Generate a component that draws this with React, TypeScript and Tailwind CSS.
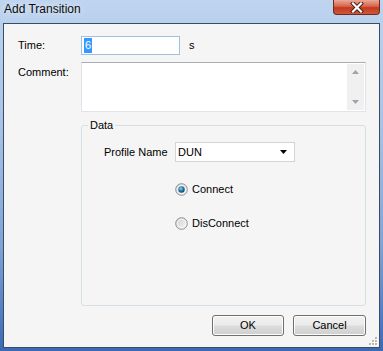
const Radio = ({ checked }: { checked?: boolean }) => (
  <svg width="13" height="13" viewBox="0 0 13 13">
    <defs>
      <linearGradient id={checked ? "rgOn" : "rgOff"} x1="0" y1="0" x2="1" y2="1">
        <stop offset="0" stopColor="#cfcfcf" />
        <stop offset="1" stopColor="#f7f7f7" />
      </linearGradient>
      <radialGradient id="dotOn" cx="0.4" cy="0.35" r="0.7">
        <stop offset="0" stopColor="#8fd3f5" />
        <stop offset="0.5" stopColor="#2c7bb3" />
        <stop offset="1" stopColor="#0d3e63" />
      </radialGradient>
    </defs>
    <circle cx="6.5" cy="6.5" r="5.8" fill={`url(#${checked ? "rgOn" : "rgOff"})`} stroke="#8c9094" strokeWidth="1" />
    <circle cx="6.5" cy="6.5" r="4.2" fill="none" stroke="#fbfbfb" strokeWidth="0.8" />
    {checked && <circle cx="6.5" cy="6.5" r="3.2" fill="url(#dotOn)" />}
  </svg>
);

const Button = ({ label, w }: { label: string; w: string }) => (
  <button
    className={`${w} h-[21px] rounded-[3px] border border-[#707070] bg-[linear-gradient(to_bottom,#f2f2f2_0%,#ebebeb_48%,#dddddd_52%,#cfcfcf_100%)] text-[11px] leading-[13px] text-black shadow-[inset_0_0_0_1px_#fcfcfc]`}
  >
    {label}
  </button>
);

export default function App() {
  return (
    <div className="w-[383px] h-[351px] flex flex-col bg-[linear-gradient(to_bottom,#bed4ef_0%,#a8c3e7_35%,#7fa3d6_70%,#3a6ab6_100%)] font-['Liberation_Sans',Arial,sans-serif] text-black overflow-hidden">
      {/* Title bar */}
      <div className="h-[23px] flex items-start justify-between">
        <span className="pl-[4px] pt-[2px] text-[12px] leading-[14px] text-[#0b0b0b] [text-shadow:0_0_6px_#ffffff]">
          Add Transition
        </span>
        <div className="mr-[3px] w-[47px] h-[15px] rounded-b-[4px] border border-t-0 border-[#6b2a1e] bg-[linear-gradient(to_bottom,#e9a898_0%,#d7644c_45%,#c23a1e_55%,#d2573b_100%)] flex items-center justify-center">
          <svg width="14" height="11" viewBox="0 0 14 11">
            <path d="M3 1.5 L11 9.5 M11 1.5 L3 9.5" stroke="#4a1a10" strokeWidth="4" strokeLinecap="square" />
            <path d="M3 1.5 L11 9.5 M11 1.5 L3 9.5" stroke="#ffffff" strokeWidth="2.2" strokeLinecap="square" />
          </svg>
        </div>
      </div>

      {/* Client area */}
      <div className="relative mx-[3px] h-[325px] border border-[#3a4c66] bg-[#f5f5f5] pl-[14px] pr-[13px] pt-[12px] text-[11px] leading-[13px]">
        {/* Time */}
        <div className="flex items-center h-[19px]">
          <span className="w-[63px]">Time:</span>
          <div className="w-[99px] h-[19px] border border-[#9fc2e4] bg-white flex items-center pl-[2px]">
            <span className="bg-[#3399ff] text-white px-[1px] h-[15px] leading-[15px]">6</span>
          </div>
          <span className="ml-[9px]">s</span>
        </div>

        {/* Comment */}
        <div className="flex items-start mt-[7px]">
          <span className="w-[63px] pt-[4px]">Comment:</span>
          <div className="w-[285px] h-[50px] border border-[#dfe3ea] border-t-[#abadb3] bg-white flex justify-end p-[1px]">
            <div className="w-[17px] h-full bg-[#f0f0f0] flex flex-col items-center justify-between py-[6px]">
              <svg width="7" height="4" viewBox="0 0 7 4">
                <path d="M0 4 L3.5 0 L7 4 Z" fill="#a3a3a3" />
              </svg>
              <svg width="7" height="4" viewBox="0 0 7 4">
                <path d="M0 0 L3.5 4 L7 0 Z" fill="#a3a3a3" />
              </svg>
            </div>
          </div>
        </div>

        {/* Data group */}
        <fieldset className="ml-[63px] mt-[7px] w-[285px] h-[187px] rounded-[3px] border border-[#d5dfe5] px-[6px]">
          <legend className="px-[2px] leading-[13px]">Data</legend>
          <div className="flex items-center mt-[10px] pl-[16px]">
            <span className="w-[71px]">Profile Name</span>
            <div className="w-[120px] h-[20px] border border-[#d4d4d4] bg-white flex items-center justify-between pl-[2px] pr-[7px]">
              <span>DUN</span>
              <svg width="7" height="4" viewBox="0 0 7 4">
                <path d="M0 0 L3.5 4 L7 0 Z" fill="#000000" />
              </svg>
            </div>
          </div>
          <div className="flex items-center h-[14px] mt-[20px] pl-[87px] gap-[4px]">
            <Radio checked />
            <span>Connect</span>
          </div>
          <div className="flex items-center h-[14px] mt-[20px] pl-[87px] gap-[4px]">
            <Radio />
            <span>DisConnect</span>
          </div>
        </fieldset>

        {/* Buttons */}
        <div className="flex justify-end gap-[9px] mt-[9px]">
          <Button label="OK" w="w-[72px]" />
          <Button label="Cancel" w="w-[73px]" />
        </div>

        {/* Resize grip */}
        <svg className="absolute right-[1px] bottom-[1px]" width="10" height="10" viewBox="0 0 10 10">
          {[
            [7, 1],
            [7, 4],
            [4, 4],
            [7, 7],
            [4, 7],
            [1, 7],
          ].map(([x, y], i) => (
            <g key={i}>
              <rect x={x + 1} y={y + 1} width="2" height="2" fill="#ffffff" />
              <rect x={x} y={y} width="2" height="2" fill="#b8b8b8" />
            </g>
          ))}
        </svg>
      </div>
    </div>
  );
}
